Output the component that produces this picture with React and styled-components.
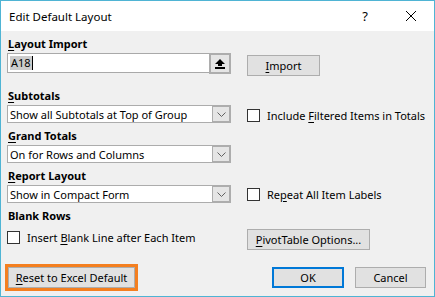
import React from 'react';
import styled, { createGlobalStyle } from 'styled-components';

const Global = createGlobalStyle`
  html, body { margin: 0; padding: 0; background: #ffffff; }
  #root { width: 435px; height: 297px; }
`;

const FONT = `"Noto Sans", "Segoe UI", "Liberation Sans", sans-serif`;

const Window = styled.div`
  box-sizing: border-box;
  width: 435px;
  height: 297px;
  border: 1px solid #4fb4d4;
  background: #f0f0f0;
  display: flex;
  flex-direction: column;
  font-family: ${FONT};
  font-size: 11px;
  color: #000;
`;

const TitleBar = styled.div`
  height: 30px;
  flex: none;
  background: #ffffff;
  display: flex;
  align-items: center;
  padding-left: 8px;
`;

const Title = styled.div`
  flex: 1;
  font-size: 11.5px;
  color: #000;
`;

const TitleButton = styled.div`
  width: 46px;
  height: 30px;
  display: flex;
  align-items: center;
  justify-content: center;
  font-size: 13px;
`;

const Body = styled.div`
  flex: 1;
  display: flex;
  flex-direction: column;
  padding: 5px 8px 0 6px;
`;

const Label = styled.div`
  font-weight: 700;
  height: 16px;
  line-height: 16px;
  margin-top: ${p => p.$mt || 0}px;
  margin-bottom: 1px;
  margin-left: 1px;
`;

const Row = styled.div`
  display: grid;
  grid-template-columns: 224px auto;
  column-gap: 16px;
  align-items: start;
  margin-top: ${p => p.$mt || 0}px;
`;

const TextBox = styled.div`
  box-sizing: border-box;
  height: 20px;
  border: 1px solid #a9a9a9;
  background: #fff;
  display: flex;
  align-items: stretch;
`;

const TextValue = styled.div`
  flex: 1;
  display: flex;
  align-items: center;
  padding-left: 2px;
`;

const Selected = styled.span`
  background: #cccccc;
  line-height: 14px;
  padding: 0 1px;
`;

const Caret = styled.span`
  width: 1px;
  height: 14px;
  background: #000;
`;

const UploadButton = styled.div`
  box-sizing: border-box;
  width: 22px;
  margin: -1px -1px -2px 0;
  border: 2px solid #adadad;
  background: #e5e5e5;
  display: flex;
  align-items: center;
  justify-content: center;
`;

const Button = styled.div`
  box-sizing: border-box;
  width: ${p => p.$w}px;
  height: 21px;
  margin-top: ${p => p.$mt || 0}px;
  margin-left: ${p => p.$ml || 0}px;
  background: #e1e1e1;
  border: ${p => (p.$default ? '2px solid #0078d7' : '1px solid #adadad')};
  outline: ${p => (p.$highlight ? '3px solid #f47f20' : 'none')};
  display: flex;
  align-items: center;
  justify-content: center;
  white-space: nowrap;
`;

const Select = styled.div`
  box-sizing: border-box;
  height: 18px;
  border: 1px solid #acacac;
  background: #fff;
  display: flex;
  align-items: stretch;
`;

const SelectValue = styled.div`
  flex: 1;
  display: flex;
  align-items: center;
  padding-left: 2px;
  white-space: nowrap;
`;

const DropButton = styled.div`
  box-sizing: border-box;
  width: 19px;
  margin: -1px -1px -1px 0;
  border: 1px solid #adadad;
  border-width: 2px 2px 2px 1px;
  background: #e5e5e5;
  display: flex;
  align-items: center;
  justify-content: center;
`;

const CheckItem = styled.div`
  display: flex;
  align-items: center;
  gap: 7px;
  height: 14px;
  margin-top: ${p => p.$mt || 0}px;
  white-space: nowrap;
`;

const Box = styled.div`
  box-sizing: border-box;
  width: 13px;
  height: 13px;
  border: 1px solid #333333;
  background: #fff;
  flex: none;
`;

const Footer = styled.div`
  display: flex;
  align-items: center;
  margin-top: 17px;
`;

const FooterRight = styled.div`
  margin-left: auto;
  display: flex;
  gap: 11px;
`;

const U = styled.span`
  text-decoration: underline;
  text-underline-offset: 2px;
`;

const Chevron = () => (
  <svg width="9" height="5" viewBox="0 0 9 5">
    <polyline points="0.5,0.5 4.5,4.5 8.5,0.5" fill="none" stroke="#606060" strokeWidth="1" />
  </svg>
);

const UploadIcon = () => (
  <svg width="10" height="10" viewBox="0 0 10 10">
    <polygon points="5,0 10,5 7,5 7,7 3,7 3,5 0,5" fill="#000" />
    <rect x="0" y="8" width="10" height="2" fill="#000" />
  </svg>
);

const CloseIcon = () => (
  <svg width="10" height="10" viewBox="0 0 10 10">
    <line x1="0" y1="0" x2="10" y2="10" stroke="#000" strokeWidth="1" />
    <line x1="10" y1="0" x2="0" y2="10" stroke="#000" strokeWidth="1" />
  </svg>
);

const Dropdown = ({ children }) => (
  <Select>
    <SelectValue>{children}</SelectValue>
    <DropButton><Chevron /></DropButton>
  </Select>
);

const Check = ({ children, mt }) => (
  <CheckItem $mt={mt}>
    <Box />
    <span>{children}</span>
  </CheckItem>
);

export default function App() {
  return (
    <>
      <Global />
      <Window>
        <TitleBar>
          <Title>Edit Default Layout</Title>
          <TitleButton>?</TitleButton>
          <TitleButton><CloseIcon /></TitleButton>
        </TitleBar>
        <Body>
          <Label><U>L</U>ayout Import</Label>
          <Row>
            <TextBox>
              <TextValue><Selected>A18</Selected><Caret /></TextValue>
              <UploadButton><UploadIcon /></UploadButton>
            </TextBox>
            <Button $w={73} $mt={2}><U>I</U>mport</Button>
          </Row>

          <Label $mt={12}><U>S</U>ubtotals</Label>
          <Row>
            <Dropdown>Show all Subtotals at Top of Group</Dropdown>
            <Check mt={3}>Include <U>F</U>iltered Items in Totals</Check>
          </Row>

          <Label $mt={5}><U>G</U>rand Totals</Label>
          <Row>
            <Dropdown>On for Rows and Columns</Dropdown>
          </Row>

          <Label $mt={5}><U>R</U>eport Layout</Label>
          <Row>
            <Dropdown>Show in Compact Form</Dropdown>
            <Check mt={2}>Re<U>p</U>eat All Item Labels</Check>
          </Row>

          <Label $mt={5}>Blank Rows</Label>
          <Row $mt={4}>
            <Check mt={1}>Insert <U>B</U>lank Line after Each Item</Check>
            <Button $w={123}><U>P</U>ivotTable Options...</Button>
          </Row>

          <Footer>
            <Button $w={127} $ml={1} $highlight><U>R</U>eset to Excel Default</Button>
            <FooterRight>
              <Button $w={72} $default>OK</Button>
              <Button $w={71}>Cancel</Button>
            </FooterRight>
          </Footer>
        </Body>
      </Window>
    </>
  );
}
